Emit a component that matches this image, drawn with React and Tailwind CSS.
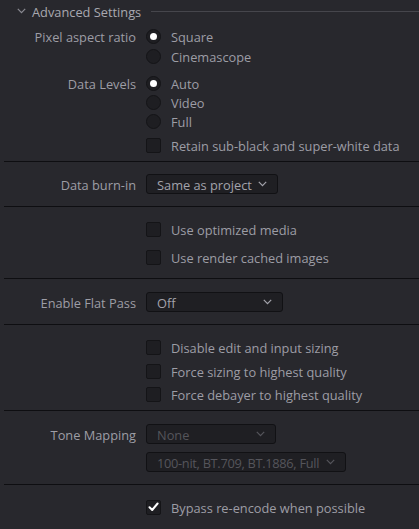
import React from "react";

const font = { fontFamily: '"Open Sans", "Noto Sans", sans-serif' };

function Chevron({ className = "" }) {
  return (
    <svg width="9" height="6" viewBox="0 0 9 6" className={`shrink-0 ${className}`}>
      <path d="M0.8 0.8 L4.5 4.6 L8.2 0.8" fill="none" stroke="currentColor" strokeWidth="1.2" />
    </svg>
  );
}

function Radio({ checked }) {
  return (
    <span className="flex h-[15px] w-[15px] shrink-0 items-center justify-center rounded-full border border-[#141417] bg-[#1e1e22]">
      {checked && <span className="h-[7px] w-[7px] rounded-full bg-white" />}
    </span>
  );
}

function Check({ checked }) {
  return (
    <span className="flex h-[15px] w-[15px] shrink-0 items-center justify-center rounded-[2px] border border-[#141417] bg-[#1e1e22]">
      {checked && (
        <svg width="11" height="10" viewBox="0 0 11 10">
          <path d="M1.5 5.2 L4.2 8 L9.6 1.5" fill="none" stroke="white" strokeWidth="2" strokeLinecap="round" strokeLinejoin="round" />
        </svg>
      )}
    </span>
  );
}

function Row({ label, children, className = "h-[20px]" }) {
  return (
    <div className={`flex items-center ${className}`}>
      <div className="mt-[2px] w-[137px] shrink-0 pr-[1px] text-right text-[#9d9da5]">{label}</div>
      <div className="ml-[9px] flex items-center">{children}</div>
    </div>
  );
}

function Option({ control, text }) {
  return (
    <div className="flex items-center">
      {control}
      <span className="ml-[10px] mt-[2px] whitespace-nowrap text-[#9d9da5]">{text}</span>
    </div>
  );
}

function Dropdown({ value, width, disabled, textClass = "" }) {
  const tight = !width;
  return (
    <div
      className={`flex h-[20px] shrink-0 items-center overflow-hidden rounded-[3px] border border-[#111114] bg-[#1f1f23] pl-[10px] pr-[10px] ${
        tight ? "" : "justify-between"
      } ${disabled ? "text-[#55555b]" : "text-[#a3a3ab]"}`}
      style={width ? { width } : undefined}
    >
      <span className={`mt-[2px] whitespace-nowrap ${textClass}`}>{value}</span>
      <Chevron className={tight ? "ml-[6px]" : ""} />
    </div>
  );
}

function Divider() {
  return <div className="ml-[4px] h-px bg-[#0e0e11]" />;
}

export default function App() {
  return (
    <div className="min-h-[529px] w-[419px] overflow-hidden bg-[#28282d] text-[12.8px] leading-none" style={font}>
      {/* section: aspect ratio and data levels */}
      <div className="flex flex-col pb-[6px]">
        <div className="flex h-[22px] items-center">
          <Chevron className="ml-[17px] text-[#8a8a92]" />
          <span className="ml-[6px] mt-[2px] whitespace-nowrap text-[#a8a8b0]">Advanced Settings</span>
          <div className="ml-[10px] h-px flex-1 bg-[#46464c]" />
        </div>
        <div className="mt-[4px]">
          <Row label="Pixel aspect ratio">
            <Option control={<Radio checked />} text="Square" />
          </Row>
          <Row label="">
            <Option control={<Radio />} text="Cinemascope" />
          </Row>
        </div>
        <div className="mt-[8px]">
          <Row label="Data Levels" className="h-[19px]">
            <Option control={<Radio checked />} text="Auto" />
          </Row>
          <Row label="" className="h-[19px]">
            <Option control={<Radio />} text="Video" />
          </Row>
          <Row label="" className="h-[19px]">
            <Option control={<Radio />} text="Full" />
          </Row>
        </div>
        <div className="mt-[4px]">
          <Row label="">
            <Option control={<Check />} text="Retain sub-black and super-white data" />
          </Row>
        </div>
      </div>
      <Divider />

      {/* section: burn-in */}
      <div className="pb-[12px] pt-[12px]">
        <Row label="Data burn-in">
          <Dropdown value="Same as project" />
        </Row>
      </div>
      <Divider />

      {/* section: media */}
      <div className="flex flex-col gap-[8px] pb-[11px] pt-[12px]">
        <Row label="">
          <Option control={<Check />} text="Use optimized media" />
        </Row>
        <Row label="">
          <Option control={<Check />} text="Use render cached images" />
        </Row>
      </div>
      <Divider />

      {/* section: flat pass */}
      <div className="pb-[12px] pt-[13px]">
        <Row label="Enable Flat Pass">
          <Dropdown value="Off" width={137} />
        </Row>
      </div>
      <Divider />

      {/* section: sizing */}
      <div className="flex flex-col pb-[6px] pt-[12px]">
        <Row label="">
          <Option control={<Check />} text="Disable edit and input sizing" />
        </Row>
        <Row label="" className="mt-[4px] h-[20px]">
          <Option control={<Check />} text="Force sizing to highest quality" />
        </Row>
        <Row label="" className="mt-[3px] h-[20px]">
          <Option control={<Check />} text="Force debayer to highest quality" />
        </Row>
      </div>
      <Divider />

      {/* section: tone mapping */}
      <div className="flex flex-col gap-[8px] pb-[12px] pt-[13px]">
        <Row label="Tone Mapping">
          <Dropdown value="None" width={130} disabled />
        </Row>
        <Row label="">
          <Dropdown value="100-nit, BT.709, BT.1886, Full" width={200} disabled textClass="tracking-[-0.3px]" />
        </Row>
      </div>
      <Divider />

      {/* section: encode */}
      <div className="pt-[12px]">
        <Row label="">
          <Option control={<Check checked />} text="Bypass re-encode when possible" />
        </Row>
      </div>
    </div>
  );
}
